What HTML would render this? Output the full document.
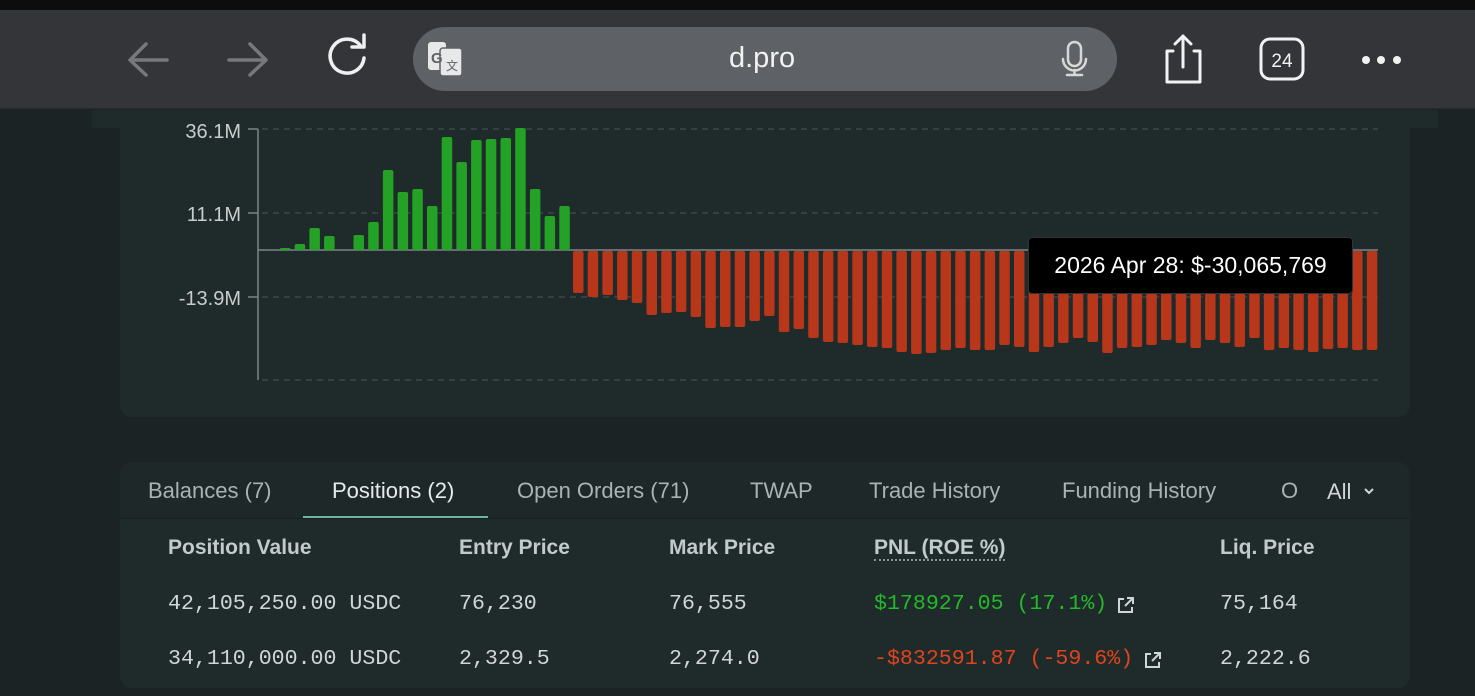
<!DOCTYPE html>
<html><head><meta charset="utf-8"><style>
*{margin:0;padding:0;box-sizing:border-box}
body{width:1475px;height:696px;overflow:hidden;background:#1b2325;font-family:"Liberation Sans",sans-serif;position:relative}
.abs{position:absolute}
.mono{font-family:"Liberation Mono",monospace}
</style></head><body>
<div class="abs" style="left:0;top:0;width:1475px;height:10px;background:#0d0d0d"></div>
<div class="abs" style="left:0;top:10px;width:1475px;height:99px;background:#333538;border-bottom:1px solid #2a2c2e"></div>
<svg class="abs" style="left:0;top:0" width="1475" height="110">
 <g stroke="#76787b" stroke-width="3.5" fill="none" stroke-linecap="round" stroke-linejoin="round">
  <path d="M167 60H131M146 44L130 60L146 75"/>
  <path d="M229 60H265M250 44L266 60L250 75"/>
 </g>
 <path d="M360 45A17 17 0 1 0 364 58" stroke="#f0f0f0" stroke-width="3.5" fill="none" stroke-linecap="round"/>
 <path d="M352 47H364V35" stroke="#f0f0f0" stroke-width="3.5" fill="none" stroke-linecap="round" stroke-linejoin="round"/>
 <rect x="413" y="27" width="704" height="64" rx="32" fill="#5e6266"/>
 <rect x="428" y="42" width="18" height="28" rx="3" fill="#e8e8e8"/>
 <rect x="440" y="48" width="22" height="28" rx="3" fill="#e8e8e8" stroke="#5e6266" stroke-width="1.5"/>
 <text x="431" y="63" font-size="15" font-weight="bold" fill="#5e6266" font-family="Liberation Sans">G</text>
 <text x="446" y="70" font-size="12" fill="#5e6266" font-family="Liberation Sans">文</text>
 <g stroke="#d8d8d8" stroke-width="2.5" fill="none" stroke-linecap="round">
  <rect x="1068" y="42" width="13" height="24" rx="6.5"/>
  <path d="M1063 59A11.5 11.5 0 0 0 1086 59M1074.5 70V74M1067 75H1082"/>
 </g>
 <g stroke="#f2f2f2" stroke-width="3" fill="none" stroke-linecap="round" stroke-linejoin="round">
  <path d="M1173 51H1167V82H1200V51H1194M1183 36V67M1175 44L1183 36L1191 44"/>
  <rect x="1261" y="39" width="42" height="40" rx="9"/>
 </g>
 <text x="1282" y="67" font-size="19" fill="#f2f2f2" text-anchor="middle" font-family="Liberation Sans">24</text>
 <g fill="#f2f2f2"><circle cx="1366" cy="60" r="4"/><circle cx="1381" cy="60" r="4"/><circle cx="1397" cy="60" r="4"/></g>
</svg>
<div class="abs" style="left:729px;top:42px;font-size:29px;color:#f2f2f2">d.pro</div>

<div class="abs" style="left:92px;top:110px;width:1346px;height:18px;background:#1f2a2a"></div>
<div class="abs" style="left:120px;top:110px;width:1290px;height:307px;background:#1f2a2a;border-radius:0 0 12px 12px"></div>
<svg class="abs" style="left:0;top:0" width="1475" height="420">
 <g stroke="#4a5555" stroke-width="1" stroke-dasharray="6 5">
  <path d="M262 129H1378M262 213H1378M262 297H1378M262 380H1378"/>
 </g>
 <path d="M258 129V380M248 129H258M248 213H258M248 297H258M258 250H1378" stroke="#7a8585" stroke-width="1.5" fill="none"/>
 <g font-family="Liberation Sans" font-size="20" fill="#c8cccc" text-anchor="end">
  <text x="241" y="138">36.1M</text><text x="241" y="221">11.1M</text><text x="241" y="305">-13.9M</text>
 </g>
 <g id="bars"></g>
</svg>
<div class="abs" style="left:1028px;top:237px;width:325px;height:57px;background:#000;border:1px solid #333;border-radius:4px;color:#fff;font-size:23px;text-align:center;line-height:55px">2026 Apr 28: $-30,065,769</div>

<div class="abs" style="left:120px;top:462px;width:1290px;height:226px;background:#1f2a2a;border-radius:12px;overflow:hidden">
 <div style="height:57px;background:#1e2828;border-bottom:1px solid #172020;position:relative;font-size:22px;color:#a9b3b3">
  <span class="abs" style="left:28px;top:16px">Balances (7)</span>
  <span class="abs" style="left:212px;top:16px;color:#e6ecec">Positions (2)</span>
  <div class="abs" style="left:183px;top:54px;width:185px;height:2px;background:#6fb5a0"></div>
  <span class="abs" style="left:397px;top:16px">Open Orders (71)</span>
  <span class="abs" style="left:630px;top:16px">TWAP</span>
  <span class="abs" style="left:749px;top:16px">Trade History</span>
  <span class="abs" style="left:942px;top:16px">Funding History</span>
  <span class="abs" style="left:1161px;top:16px">O</span>
  <span class="abs" style="left:1207px;top:17px;color:#d0d6d6">All</span>
  <svg class="abs" style="left:1243px;top:24px" width="12" height="10"><path d="M2 3L6 7L10 3" stroke="#d0d6d6" stroke-width="2" fill="none"/></svg>
 </div>
 <div style="position:relative;font-size:21px">
  <div style="font-weight:bold;color:#c2cbcb">
   <span class="abs" style="left:48px;top:17px">Position Value</span>
   <span class="abs" style="left:339px;top:17px">Entry Price</span>
   <span class="abs" style="left:549px;top:17px">Mark Price</span>
   <span class="abs" style="left:754px;top:17px;border-bottom:2px dotted #8a9595;line-height:23px">PNL (ROE %)</span>
   <span class="abs" style="left:1100px;top:17px">Liq. Price</span>
  </div>
  <div class="mono" style="color:#d0d6d6;font-size:21.6px">
   <span class="abs" style="left:48px;top:73px">42,105,250.00 USDC</span>
   <span class="abs" style="left:339px;top:73px">76,230</span>
   <span class="abs" style="left:549px;top:73px">76,555</span>
   <span class="abs" style="left:754px;top:73px;color:#25b82a">$178927.05 (17.1%)</span>
   <span class="abs" style="left:1100px;top:73px">75,164</span>
   <span class="abs" style="left:48px;top:128px">34,110,000.00 USDC</span>
   <span class="abs" style="left:339px;top:128px">2,329.5</span>
   <span class="abs" style="left:549px;top:128px">2,274.0</span>
   <span class="abs" style="left:754px;top:128px;color:#e0441c">-$832591.87 (-59.6%)</span>
   <span class="abs" style="left:1100px;top:128px">2,222.6</span>
  </div>
  <svg class="abs" style="left:996px;top:76px" width="20" height="20"><path d="M8 4H3V17H16V12M11 3H17V9M17 3L9 11" stroke="#d0d6d6" stroke-width="2" fill="none"/></svg>
  <svg class="abs" style="left:1023px;top:131px" width="20" height="20"><path d="M8 4H3V17H16V12M11 3H17V9M17 3L9 11" stroke="#d0d6d6" stroke-width="2" fill="none"/></svg>
 </div>
</div>
<script>
var g=document.getElementById('bars'),s='';
var gt=[248,244,228,236,250,235,222,170,192,189,206,137,162,140,139,138,128,189,216,206];
for(var i=0;i<gt.length;i++){var x=280+i*14.7;if(gt[i]<250)s+='<rect x="'+x.toFixed(1)+'" y="'+gt[i]+'" width="10.5" height="'+(250-gt[i])+'" rx="2" fill="#24a226"/>';}
var rb=[293,297,295,300,303,315,313,312,317,328,327,327,321,316,332,329,338,342,343,345,347,348,352,354,353,350,348,350,350,345,347,352,347,343,338,342,353,348,347,345,340,343,348,340,343,347,338,350,348,350,352,349,348,350,350];
for(var j=0;j<rb.length;j++){var x=573+j*14.7;s+='<rect x="'+x.toFixed(1)+'" y="251" width="10.5" height="'+(rb[j]-251)+'" rx="2" fill="#b8361a"/>';}
g.innerHTML=s;
</script>
</body></html>
